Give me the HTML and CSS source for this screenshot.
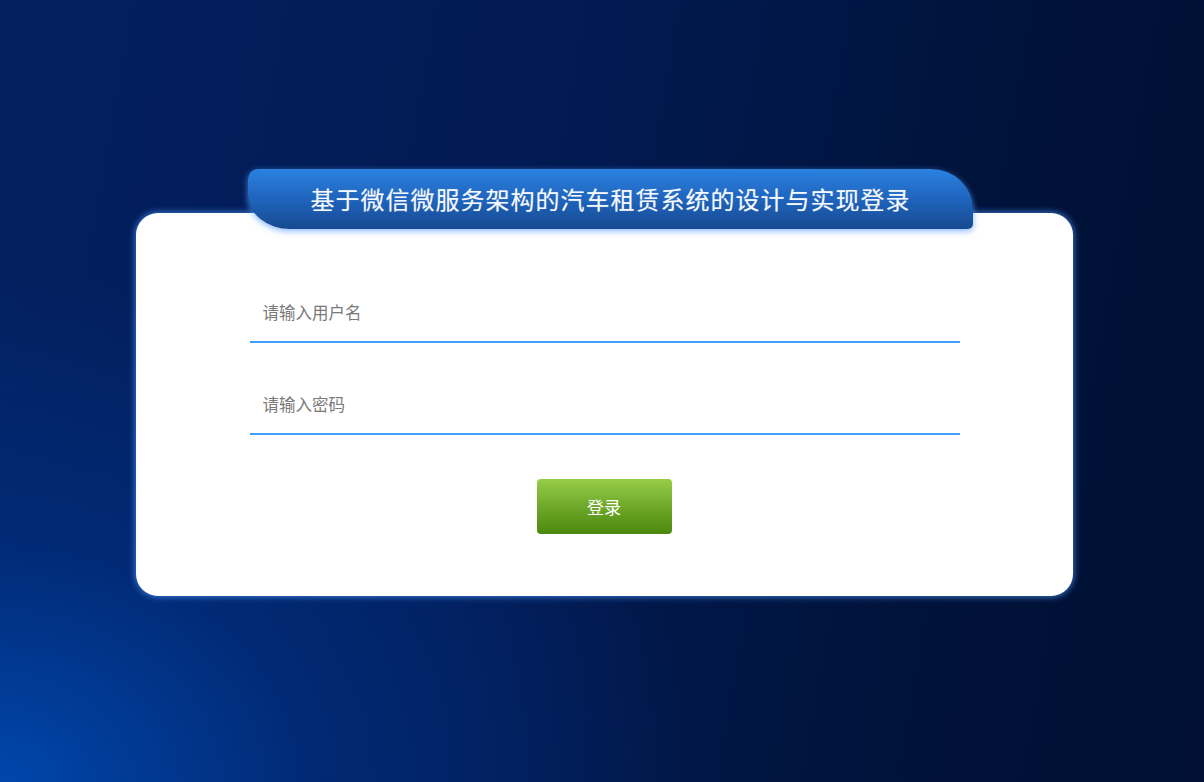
FILE: index.html
```html
<!DOCTYPE html>
<html lang="zh-CN">
<head>
<meta charset="utf-8">
<title>登录</title>
<link rel="stylesheet" href="styles.css">
</head>
<body>
<div class="page">
  <div class="login">
    <div class="tab">基于微信微服务架构的汽车租赁系统的设计与实现登录</div>
    <form class="card">
      <div class="field"><input class="input" type="text" placeholder="请输入用户名"></div>
      <div class="field"><input class="input" type="password" placeholder="请输入密码"></div>
      <div class="actions"><button class="btn" type="button">登录</button></div>
    </form>
  </div>
</div>
</body>
</html>
```
FILE: styles.css
```css
* { box-sizing: border-box; }
html, body { margin: 0; padding: 0; height: 100%; }
body {
  font-family: "Microsoft YaHei", "Noto Sans CJK SC", "Noto Sans", sans-serif;
  background:
    radial-gradient(ellipse 700px 520px at 0% 100%, rgba(0, 72, 176, 0.95) 0%, rgba(0, 52, 140, 0.55) 45%, rgba(0, 30, 90, 0) 100%),
    linear-gradient(100deg, #03205f 0%, #021a52 45%, #00133b 75%, #000f33 100%);
  overflow: hidden;
}
.page {
  height: 782px;
  display: flex;
  justify-content: center;
  padding-top: 169px;
  padding-left: 4px;
}
.login {
  width: 937px;
  display: flex;
  flex-direction: column;
}
.tab {
  position: relative;
  z-index: 1;
  width: 725px;
  height: 60px;
  margin-left: 112px;
  margin-bottom: -16px;
  border-radius: 10px 42px 5px 42px / 10px 40px 5px 34px;
  background: linear-gradient(180deg, #2b82e0 0%, #1f64bd 50%, #174a90 100%);
  box-shadow: 0 2px 6px rgba(90, 160, 255, 0.75);
  color: #f4f8ff;
  font-size: 24px;
  line-height: 60px;
  text-align: center;
  letter-spacing: 1px;
  text-indent: 1px;
  text-shadow: 0 0 1px rgba(255,255,255,0.4);
}
.card {
  margin: 0;
  height: 383px;
  background: #fff;
  border-radius: 22px;
  box-shadow: 0 0 6px 1px rgba(70, 140, 235, 0.8);
  padding: 80px 113px 0 114px;
  display: flex;
  flex-direction: column;
}
.field { height: 50px; }
.field + .field { margin-top: 42px; }
.input {
  width: 710px;
  height: 50px;
  border: 0;
  border-bottom: 2px solid #409eff;
  outline: none;
  padding: 0 0 10px 13px;
  font-family: inherit;
  font-size: 16.5px;
  color: #333;
  background: transparent;
}
.input::placeholder { color: #7a7a7a; }
.actions {
  margin-top: 44px;
  display: flex;
  justify-content: center;
  padding-right: 1px;
}
.btn {
  width: 135px;
  height: 55px;
  border: 0;
  border-radius: 4px;
  background: linear-gradient(180deg, #96cd48 0%, #6fa82a 50%, #4b890c 100%);
  color: #fff;
  font-family: inherit;
  font-size: 17px;
  cursor: pointer;
}
```
